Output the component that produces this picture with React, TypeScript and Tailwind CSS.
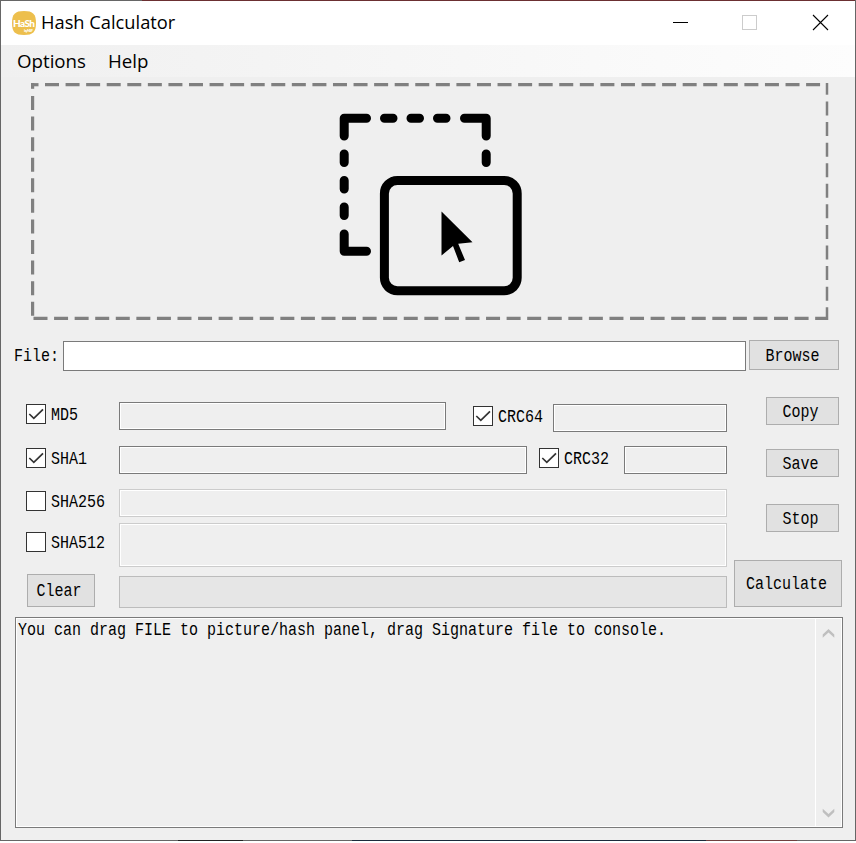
import type { ReactNode } from "react";

function Mono({ children, center = false }: { children: ReactNode; center?: boolean }) {
  return (
    <span
      className={`block whitespace-pre font-['Liberation_Mono',monospace] text-[18px] leading-[20px] text-black scale-x-[0.8333] ${
        center ? "origin-center" : "origin-left"
      }`}
    >
      {children}
    </span>
  );
}

function Button({ label, className }: { label: string; className: string }) {
  return (
    <button
      className={`flex shrink-0 items-center justify-center border border-[#adadad] bg-[#e1e1e1] pr-[3px] ${className}`}
    >
      <Mono center>{label}</Mono>
    </button>
  );
}

function Field({ className, active = false }: { className: string; active?: boolean }) {
  return (
    <div
      className={`shrink-0 border bg-[#efefef] inset-ring inset-ring-white ${
        active ? "border-[#7a7a7a]" : "border-[#cccccc]"
      } ${className}`}
    />
  );
}

function Check({ label, checked = false, className }: { label: string; checked?: boolean; className: string }) {
  return (
    <label className={`flex h-5 shrink-0 items-start gap-[5px] ${className}`}>
      <span className="block size-5 shrink-0 border border-[#333333] bg-white">
        {checked && (
          <svg viewBox="0 0 18 18" className="size-[18px]" fill="none" stroke="#333" strokeWidth="1.7">
            <path d="M2.3 9 L6.8 13.3 L16 4.3" />
          </svg>
        )}
      </span>
      <span className="pt-px">
        <Mono>{label}</Mono>
      </span>
    </label>
  );
}

function DropZone() {
  return (
    <svg width="854" height="263" viewBox="1 77 854 263" className="block shrink-0">
      <g fill="none" stroke="#808080" strokeWidth="3.2">
        <path d="M31 84.7H38.5" />
        <path d="M45 84.7H821" strokeDasharray="14 6.57" />
        <path d="M32.6 83V88.8" />
        <path d="M32.6 96V317" strokeDasharray="14 6.57" />
        <path d="M33.5 318.3H828" strokeDasharray="14 6.57" />
        <path d="M827 83V94.7" strokeWidth="2.5" />
        <path d="M827 101.5V320" strokeWidth="2.5" strokeDasharray="14 6.57" />
      </g>
      <g fill="none" stroke="#000" strokeWidth="9" strokeLinecap="round" strokeLinejoin="round">
        <path d="M344.2 136V118.2H366.5" />
        <path d="M464.5 118.2H486.2V136" />
        <path d="M344.2 234V251.2H366.5" />
        <path d="M384.5 118.2h8.5M411 118.2h8.5M437.5 118.2h8.5" />
        <path d="M344.2 154v8.5M344.2 180.5v8.5M344.2 207v8.5M486.2 154v8.5" />
        <rect x="384.4" y="180.4" width="132.8" height="110.4" rx="13" />
      </g>
      <path d="M441.5 211.5V255.5L453 246L459.2 262.2L465 260L458.2 243.8L472.5 242.3Z" fill="#000" />
    </svg>
  );
}

function TitleBar() {
  return (
    <header className="flex h-11 shrink-0 items-center bg-white pl-[11px]">
      <svg width="24" height="24" viewBox="0 0 24 24" className="mb-px shrink-0">
        <path d="M12 0C21 0 24 3 24 12S21 24 12 24S0 21 0 12S3 0 12 0Z" fill="#edbf4d" />
        <text x="1" y="15.5" fill="#fff" fontFamily="Lato, sans-serif" fontWeight="900" fontSize="10" textLength="22">
          HaSh
        </text>
        <text x="12" y="20.5" fill="#fff" fontFamily="Lato, sans-serif" fontWeight="700" fontSize="4" textLength="9">
          by NSF
        </text>
      </svg>
      <h1 className="mb-[2px] ml-[5px] whitespace-nowrap font-['Open_Sans',sans-serif] text-[18.3px] leading-6 text-black">
        Hash Calculator
      </h1>
      <svg width="200" height="44" viewBox="655 1 200 44" className="ml-auto" fill="none" shapeRendering="crispEdges">
        <path d="M673 22.5H688" stroke="#000" />
        <rect x="742.5" y="15.5" width="14" height="14" stroke="#ccc" />
        <path d="M813 15L828 30M828 15L813 30" stroke="#000" strokeWidth="1.1" shapeRendering="auto" />
      </svg>
    </header>
  );
}

export default function App() {
  return (
    <div className="flex h-[841px] w-[856px] flex-col overflow-hidden border-x border-[#666666] bg-[#efefef]">
      <div className="h-px shrink-0 bg-[linear-gradient(to_right,#666_141px,#6b2f31_141px)]" />
      <TitleBar />
      <nav className="flex h-8 shrink-0 items-center gap-[22px] bg-linear-to-r from-[#f0f0f0] to-[#fdfdfd] pl-4 font-['Open_Sans',sans-serif] text-[18.7px] leading-6 text-black">
        <span>Options</span>
        <span>Help</span>
      </nav>
      <DropZone />
      <div className="flex h-[31px] shrink-0 items-start pl-[13px]">
        <div className="w-[49px] shrink-0 pt-[6px]">
          <Mono>File:</Mono>
        </div>
        <div className="mt-px h-[30px] w-[683px] shrink-0 border border-[#7a7a7a] bg-white" />
        <Button label="Browse" className="ml-[3px] h-[30px] w-[90px] pt-[2px]" />
      </div>
      <div className="flex h-[246px] shrink-0">
        <div className="w-[726px] shrink-0 pt-[31px]">
          <div className="flex h-[44px] items-start pl-[25px]">
            <Check label="MD5" checked className="mt-[2px] w-[93px]" />
            <Field active className="h-7 w-[327px]" />
            <Check label="CRC64" checked className="mt-1 ml-[27px] w-[80px]" />
            <Field active className="mt-[2px] h-7 w-[174px]" />
          </div>
          <div className="flex h-[43px] items-start pl-[25px]">
            <Check label="SHA1" checked className="mt-[2px] w-[93px]" />
            <Field active className="h-7 w-[408px]" />
            <Check label="CRC32" checked className="mt-[2px] ml-3 w-[85px]" />
            <Field active className="h-7 w-[103px]" />
          </div>
          <div className="flex h-[34px] items-start pl-[25px]">
            <Check label="SHA256" className="mt-[2px] w-[93px]" />
            <Field className="h-7 w-[608px]" />
          </div>
          <div className="flex h-[51px] items-start pl-[25px]">
            <Check label="SHA512" className="mt-[9px] w-[93px]" />
            <Field className="h-11 w-[608px]" />
          </div>
          <div className="flex items-start pl-[26px]">
            <Button label="Clear" className="h-[33px] w-[68px]" />
            <div className="mt-[2px] ml-6 h-8 w-[608px] shrink-0 border border-[#bcbcbc] bg-[#e6e6e6]" />
          </div>
        </div>
        <div className="flex w-[115px] flex-col items-end pt-[26px] pr-[3px]">
          <Button label="Copy" className="h-7 w-[73px] pt-[2px]" />
          <Button label="Save" className="mt-6 h-7 w-[73px] pt-[2px]" />
          <Button label="Stop" className="mt-[27px] h-7 w-[73px] pt-[2px]" />
          <Button label="Calculate" className="mt-7 -mr-[3px] h-[47px] w-[108px]" />
        </div>
      </div>
      <div className="ml-[14px] flex h-[211px] w-[828px] shrink-0 border border-[#7a7a7a] p-px inset-ring inset-ring-white">
        <div className="w-[798px] shrink-0 pt-px pl-px">
          <Mono>You can drag FILE to picture/hash panel, drag Signature file to console.</Mono>
        </div>
        <div className="flex flex-1 flex-col items-start justify-between border-l border-white pt-[9px] pb-[8px] pl-[6px]">
          <svg width="13" height="10" viewBox="0 0 13 10" fill="#bfbfbf">
            <path d="M6.5 1L12.3 6.5V9.8L6.5 4.6L.7 9.8V6.5Z" />
          </svg>
          <svg width="13" height="10" viewBox="0 0 13 10" fill="#bfbfbf">
            <path d="M6.5 9.5L12.3 4V.7L6.5 5.9L.7 .7V4Z" />
          </svg>
        </div>
      </div>
      <div className="mt-auto h-px shrink-0 bg-[linear-gradient(to_right,#666_177px,#222_177px,#222_242px,#666_242px,#666_351px,#1b2b3b_351px,#1b2b3b_705px,#70403f_705px,#70403f_796px,#666_796px)]" />
    </div>
  );
}
